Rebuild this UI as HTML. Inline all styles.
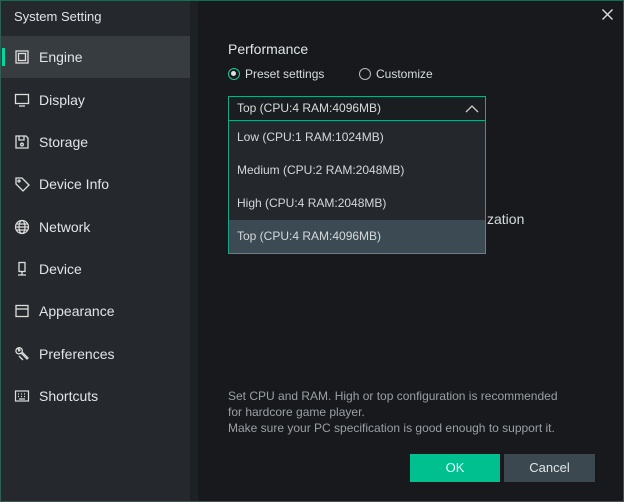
<!DOCTYPE html>
<html><head><meta charset="utf-8"><style>
*{margin:0;padding:0;box-sizing:border-box}
body{width:624px;height:502px;background:#17191c;font-family:"Liberation Sans",sans-serif;color:#d8dcde;position:relative;overflow:hidden;font-size:13px}
.frame{position:absolute;inset:0;border:1px solid #2f5f52;pointer-events:none;z-index:10}
.side{position:absolute;left:0;top:0;width:190px;height:502px;background:#25292d}
.strip{position:absolute;left:190px;top:0;width:8px;height:502px;background:#1e2124}
.title{position:absolute;left:14px;top:9px;font-size:13px;color:#e0e4e6}
.item{position:absolute;left:0;width:190px;height:42px;display:flex;align-items:center;font-size:14px;color:#e2e5e7}
.item svg{position:absolute;left:14px;width:16px;height:16px}
.item span{position:absolute;left:39px}
.sel{background:#373c40}
.sel::before{content:"";position:absolute;left:2px;top:12px;width:3px;height:18px;background:#00d8a4}
.t{position:absolute;white-space:nowrap}
.radio{position:absolute;width:12px;height:12px;border-radius:50%;border:1.5px solid #bbb}
.dd{position:absolute;left:228px;top:96px;width:258px;height:158px;border:1px solid #1fa486;background:#24282c}
.dd .head{height:24px;background:#1b1e21;border-bottom:1px solid #1fa486;padding-left:8px;line-height:23px;font-size:12px}
.opt{height:33px;line-height:33px;padding-left:8px;font-size:12px;color:#d4d8da}
.btn{position:absolute;top:454px;height:28px;line-height:28px;text-align:center;font-size:13px}
</style></head><body>
<div class="side"></div><div class="strip"></div>
<div class="title">System Setting</div>
<div class="item sel" style="top:36px"><svg viewBox="0 0 16 16" fill="none" stroke="#ddd" stroke-width="1.3"><rect x="2" y="2" width="12" height="12"/><rect x="4.5" y="4.5" width="7" height="7"/></svg><span>Engine</span></div>
<div class="item" style="top:79px"><svg viewBox="0 0 16 16" fill="none" stroke="#ddd" stroke-width="1.3"><rect x="1.5" y="2.5" width="13" height="9"/><path d="M5 14h6"/></svg><span>Display</span></div>
<div class="item" style="top:121px"><svg viewBox="0 0 16 16" fill="none" stroke="#ddd" stroke-width="1.3"><path d="M2 2h10l2 2v10H2z"/><path d="M5 2v4h5V2"/><circle cx="8" cy="10.5" r="1.3"/></svg><span>Storage</span></div>
<div class="item" style="top:163px"><svg viewBox="0 0 16 16" fill="none" stroke="#ddd" stroke-width="1.3"><path d="M2 2h6l7 7-6 6-7-7z"/><circle cx="5" cy="5" r="1"/></svg><span>Device Info</span></div>
<div class="item" style="top:206px"><svg viewBox="0 0 16 16" fill="none" stroke="#ddd" stroke-width="1.2"><circle cx="8" cy="8" r="6.5"/><ellipse cx="8" cy="8" rx="3" ry="6.5"/><path d="M1.5 8h13M2.5 5h11M2.5 11h11"/></svg><span>Network</span></div>
<div class="item" style="top:248px"><svg viewBox="0 0 16 16" fill="none" stroke="#ddd" stroke-width="1.3"><rect x="5" y="1.5" width="6" height="9"/><path d="M8 10.5v3M4 14h8"/></svg><span>Device</span></div>
<div class="item" style="top:290px"><svg viewBox="0 0 16 16" fill="none" stroke="#ddd" stroke-width="1.3"><rect x="2" y="2.5" width="12" height="11"/><path d="M2 6h12"/></svg><span>Appearance</span></div>
<div class="item" style="top:333px"><svg viewBox="0 0 16 16" fill="none" stroke="#ddd" stroke-width="1.3"><path d="M9 14l-4-4M4 2a3 3 0 1 0 3 5l6 6 1-1-6-6a3 3 0 0 0-4-4l2 2-1 1z"/></svg><span>Preferences</span></div>
<div class="item" style="top:375px"><svg viewBox="0 0 16 16" fill="none" stroke="#ddd" stroke-width="1.2"><rect x="1.5" y="3" width="13" height="10"/><path d="M4 6h1M7 6h1M10 6h1M4 8.5h1M7 8.5h1M10 8.5h1M5 11h6"/></svg><span>Shortcuts</span></div>

<svg style="position:absolute;left:602px;top:9px" width="11" height="11" viewBox="0 0 11 11" stroke="#ddd" stroke-width="1.4"><path d="M0.5 0.5l10 10M10.5 0.5l-10 10"/></svg>
<div class="t" style="left:228px;top:41px;font-size:14px;color:#e2e5e7">Performance</div>
<div class="radio" style="left:228px;top:68px;border-color:#1fc79c"><div style="position:absolute;left:2px;top:2px;width:5px;height:5px;border-radius:50%;background:#e0e0e0"></div></div>
<div class="t" style="left:245px;top:67px;font-size:12px">Preset settings</div>
<div class="radio" style="left:359px;top:68px"></div>
<div class="t" style="left:376px;top:67px;font-size:12px">Customize</div>
<div class="t" style="left:487px;top:211px;font-size:14px">zation</div>
<div class="dd">
<div class="head">Top (CPU:4 RAM:4096MB)<svg style="position:absolute;right:6px;top:7px" width="14" height="10" viewBox="0 0 14 10" fill="none" stroke="#ccc" stroke-width="1.3"><path d="M1 8l6-6 6 6"/></svg></div>
<div class="opt">Low (CPU:1 RAM:1024MB)</div>
<div class="opt">Medium (CPU:2 RAM:2048MB)</div>
<div class="opt">High (CPU:4 RAM:2048MB)</div>
<div class="opt" style="background:#3c4a53">Top (CPU:4 RAM:4096MB)</div>
</div>
<div class="t" style="left:228px;top:388px;font-size:12px;line-height:16px;color:#9aa0a4">Set CPU and RAM. High or top configuration is recommended<br>for hardcore game player.<br>Make sure your PC specification is good enough to support it.</div>
<div class="btn" style="left:410px;width:90px;background:#00c08f;color:#e8fff8">OK</div>
<div class="btn" style="left:504px;width:91px;background:#3b4850;color:#e0e4e6">Cancel</div>
<div class="frame"></div>
</body></html>
